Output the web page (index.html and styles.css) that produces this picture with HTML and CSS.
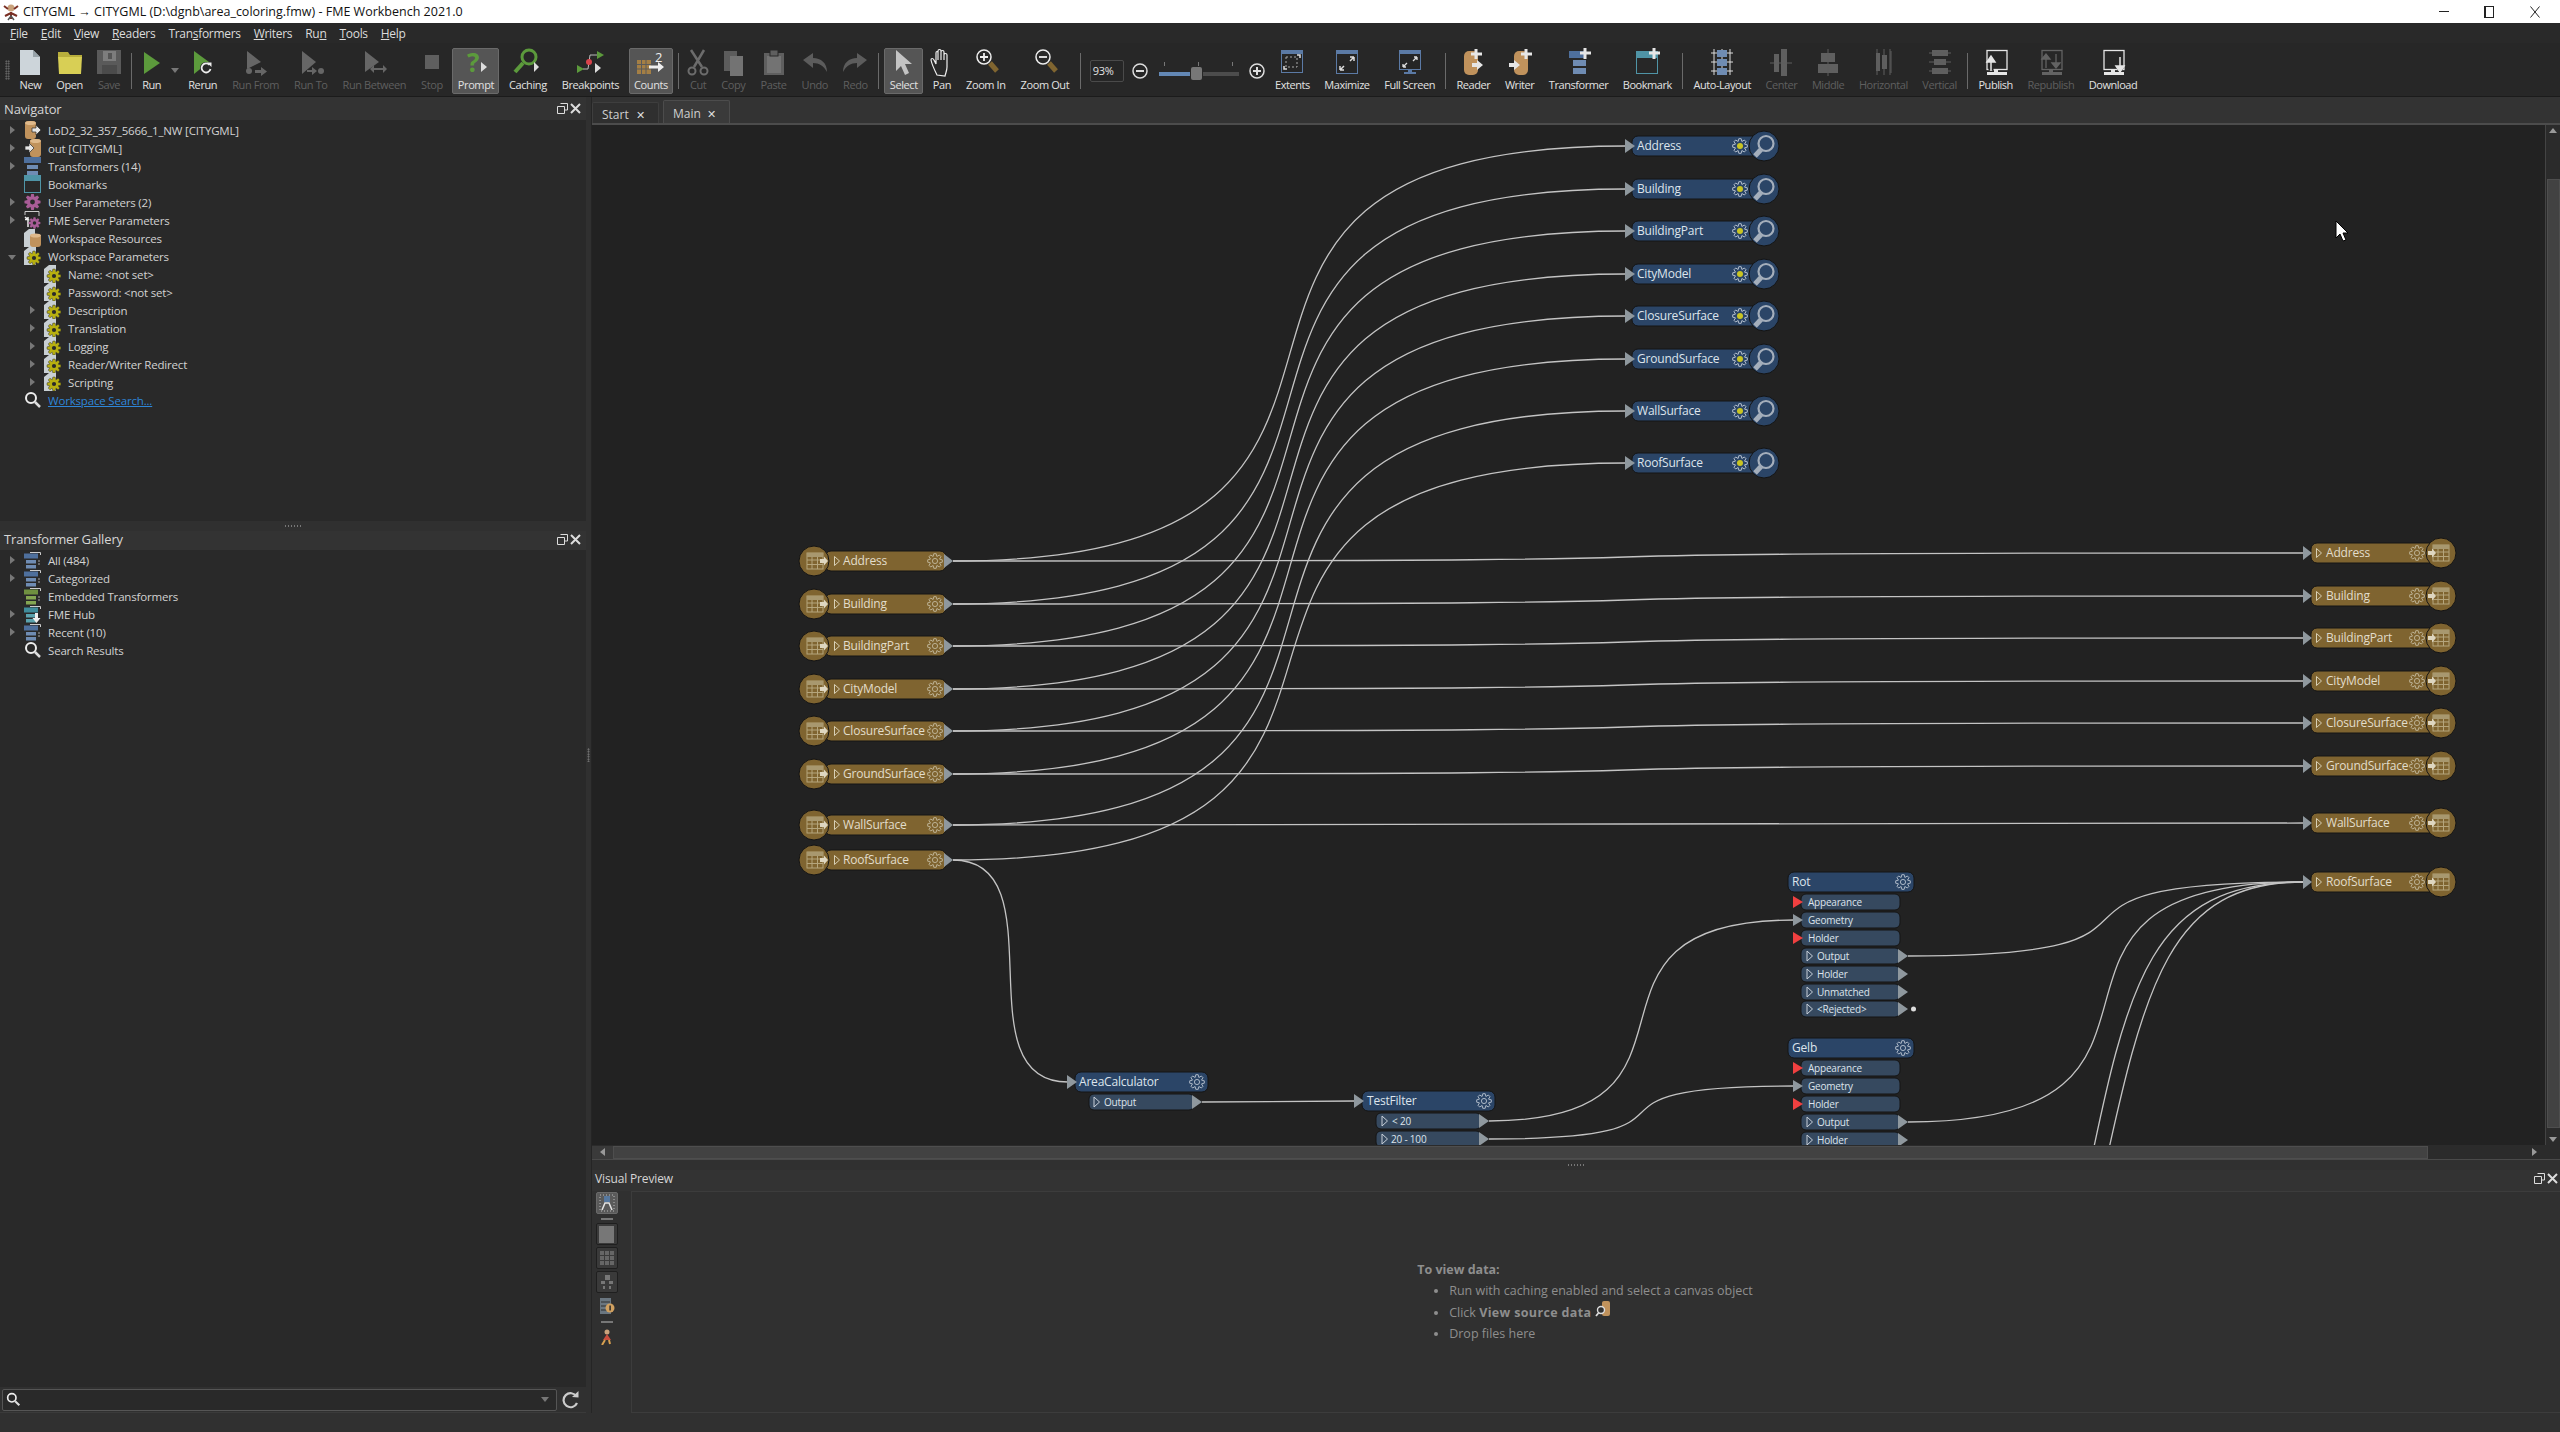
FILE: index.html
```html
<!DOCTYPE html>
<html>

<head>
    <meta charset="utf-8">
    <meta name="viewport" content="width=device-width">
    <title>FME Workbench</title>
    <link rel="stylesheet" href="styles.css">
</head>

<body>
    <!-- shared icons -->
    <svg class="defs" width="0" height="0">
        <defs>
            <polygon id="gear" points="-1.8,-4.6 -1.2,-7.3 1.2,-7.3 1.8,-4.6 1.98,-4.53 4.31,-6.01 6.01,-4.31 4.53,-1.98 4.6,-1.8 7.3,-1.2 7.3,1.2 4.6,1.8 4.53,1.98 6.01,4.31 4.31,6.01 1.98,4.53 1.8,4.6 1.2,7.3 -1.2,7.3 -1.8,4.6 -1.98,4.53 -4.31,6.01 -6.01,4.31 -4.53,1.98 -4.6,1.8 -7.3,1.2 -7.3,-1.2 -4.6,-1.8 -4.53,-1.98 -6.01,-4.31 -4.31,-6.01 -1.98,-4.53" />
            <g id="gear-plain">
                <use href="#gear" />
                <circle r="2.600" />
            </g>
            <g id="table">
                <rect x="0" y="-8" width="16" height="16" fill="none" stroke="#b5a57c" />
                <rect x="0" y="-8" width="16" height="4" fill="#a8986f" />
                <path d="M0 -1H16M0 3.5H16M5 -4V8M10.5 -4V8" stroke="#b5a57c" />
            </g>
            <g id="reader-row">
                <rect class="bar-brown" x="825" y="-10" width="121" height="20" rx="6" />
                <polygon class="port" points="944,-7 953,0 944,7" />
                <circle class="bar-brown" cx="814" r="15" />
                <use href="#table" x="807" />
                <path d="M820 -2h4v-2.5l4 4.5-4 4.5v-2.5h-4z" fill="#ded6c0" />
                <polygon class="tri-brown" points="834.5,-4.5 839.5,0 834.5,4.5" />
                <use href="#gear-plain" class="gear-brown" x="935" />
            </g>
            <g id="writer-row">
                <rect class="bar-brown" x="2311" y="-10" width="125" height="20" rx="6" />
                <polygon class="port" points="2303,-7 2312,0 2303,7" />
                <circle class="bar-brown" cx="2441" r="15" />
                <use href="#table" x="2433" />
                <path d="M2428 -2h4v-2.5l4 4.5-4 4.5v-2.5h-4z" fill="#ded6c0" />
                <polygon class="tri-brown" points="2316.5,-4.5 2321.5,0 2316.5,4.5" />
                <use href="#gear-plain" class="gear-brown" x="2417" />
            </g>
            <g id="inspector-row">
                <rect class="bar-blue" x="1632" y="-10" width="130" height="20" rx="6" />
                <polygon class="port" points="1625,-7 1635,0 1625,7" />
                <circle class="bar-blue" cx="1764" r="15" />
                <circle cx="1766" cy="-2.5" r="7.500" fill="none" stroke="#a4aebb" stroke-width="2.200" />
                <path d="M1761 3.500L1755 10" stroke="#a4aebb" stroke-width="5" />
                <use href="#gear" class="gear-blue" x="1740" />
                <circle class="gear-dot" cx="1740" r="3" />
            </g>
            <g id="in-row">
                <rect class="row-blue" width="99" height="16" y="-8" rx="5" />
            </g>
            <g id="out-row">
                <rect class="row-blue" width="99" height="16" y="-8" rx="5" />
                <polygon class="tri-blue" points="6,-5 11.500,0 6,5" />
                <polygon class="port" points="97,-7 107,0 97,7" />
            </g>
            <polygon id="port-red" class="port-red" points="-8,-6 2,0 -8,6" />
            <polygon id="port-grey" class="port" points="-8,-6 2,0 -8,6" />

            <symbol id="i-reader" viewBox="0 0 18 18">
                <rect x="1" y="0" width="11" height="18" rx="3" fill="#c0925c" />
                <ellipse cx="6.500" cy="2" rx="5.500" ry="2" fill="#dfb98b" />
                <path d="M8 7h4V4l5 5-5 5v-3H8z" fill="#e6e6e6" stroke="#292929" stroke-width=".7" />
            </symbol>
            <symbol id="i-writer" viewBox="0 0 18 18">
                <rect x="6" y="0" width="11" height="18" rx="3" fill="#c0925c" />
                <ellipse cx="11.500" cy="2" rx="5.500" ry="2" fill="#dfb98b" />
                <path d="M1 7h4V4l5 5-5 5v-3H1z" fill="#e6e6e6" stroke="#292929" stroke-width=".7" />
            </symbol>
            <symbol id="i-trans" viewBox="0 0 18 18">
                <rect x="0" y="0" width="17" height="6" fill="#4e6f9c" />
                <rect x="3" y="8" width="11" height="4" fill="#6f8cb3" />
                <rect x="3" y="14" width="11" height="4" fill="#6f8cb3" />
            </symbol>
            <symbol id="i-book" viewBox="0 0 18 18">
                <rect x=".5" y=".5" width="16" height="17" fill="none" stroke="#4f94a6" />
                <rect x="0" y="0" width="17" height="6" fill="#4f94a6" />
            </symbol>
            <symbol id="i-user" viewBox="0 0 18 18">
                <g transform="translate(8.500 9) scale(1.100)">
                    <use href="#gear" fill="#a95c97" />
                    <circle r="2.200" fill="#292929" />
                </g>
            </symbol>
            <symbol id="i-server" viewBox="0 0 18 18">
                <path d="M1 4V.5H15V5" fill="none" stroke="#ccc" />
                <path d="M4 16V6M1 8.500H4L1 6" fill="none" stroke="#eee" stroke-width="1.500" />
                <g transform="translate(10.500 12) scale(.8)">
                    <use href="#gear" fill="#a95c97" />
                    <circle r="2.200" fill="#292929" />
                </g>
            </symbol>
            <symbol id="i-res" viewBox="0 0 18 18">
                <path d="M0 4L5 0H11V18H0z" fill="#c8cfd3" />
                <rect x="6" y="5" width="11" height="13" rx="3" fill="#c0925c" />
                <ellipse cx="11.500" cy="6.500" rx="5.500" ry="2" fill="#dfb98b" />
            </symbol>
            <symbol id="i-param" viewBox="0 0 18 18">
                <path d="M0 4L5 0H12V18H0z" fill="#c8cfd3" />
                <g transform="translate(10 11) scale(.95)">
                    <use href="#gear" fill="#b8b010" stroke="#292929" stroke-width=".5" />
                    <circle r="2.200" fill="#2a2a2a" />
                </g>
            </symbol>
            <symbol id="i-search" viewBox="0 0 18 18">
                <circle cx="7" cy="7" r="5" fill="none" stroke="#eee" stroke-width="2" />
                <path d="M11 11L16 16" stroke="#ddd" stroke-width="2.500" />
            </symbol>
            <symbol id="i-gblue" viewBox="0 0 18 18">
                <path d="M6 1.500H16.500V4" fill="none" stroke="#ccc" />
                <rect x="0" y="2.500" width="14" height="5" fill="#4e6f9c" />
                <rect x="2" y="9" width="10" height="3.500" fill="#6f8cb3" />
                <rect x="2" y="14" width="10" height="3.500" fill="#6f8cb3" />
                <path d="M14 10h2M14 13h2" stroke="#aaa" />
            </symbol>
            <symbol id="i-ggreen" viewBox="0 0 18 18">
                <path d="M6 1.500H16.500V4" fill="none" stroke="#ccc" />
                <rect x="0" y="2.500" width="14" height="5" fill="#6f9040" />
                <rect x="2" y="9" width="10" height="3.500" fill="#84a652" />
                <rect x="2" y="14" width="10" height="3.500" fill="#84a652" />
                <path d="M14 10h2M14 13h2" stroke="#aaa" />
            </symbol>
            <symbol id="i-gteal" viewBox="0 0 18 18">
                <path d="M6 1.500H16.500V4" fill="none" stroke="#ccc" />
                <rect x="0" y="2.500" width="14" height="5" fill="#3f8c9b" />
                <rect x="2" y="9" width="10" height="3.500" fill="#5aa2ae" />
                <rect x="2" y="14" width="10" height="3.500" fill="#5aa2ae" />
                <path d="M11 8h3v5h2.500l-4 5-4-5H11z" fill="#eee" />
            </symbol>
        </defs>
    </svg>

    <div class="titlebar">
        <svg class="app-icon" width="18" height="18" viewBox="0 0 18 18">
            <circle cx="9" cy="5" r="3.500" fill="#c9a27c" />
            <path d="M2 3l4 3M16 3l-4 3M9 9v7M9 10l-6 3M9 10l6 3" stroke="#7a2f24" stroke-width="2" />
            <path d="M6 17l3-4 3 4" stroke="#555" stroke-width="1.500" fill="none" />
        </svg>
        <span class="title-text">CITYGML → CITYGML (D:\dgnb\area_coloring.fmw) - FME Workbench 2021.0</span>
        <div class="window-btns">
            <span class="win-min"></span>
            <span class="win-max"></span>
            <svg width="12" height="12" viewBox="0 0 12 12"><path d="M1.500 .5L10.500 11.500M10.500 .5L1.500 11.500" stroke="#222" /></svg>
        </div>
    </div>

    <div class="menubar">
        <span><u>F</u>ile</span>
        <span><u>E</u>dit</span>
        <span><u>V</u>iew</span>
        <span><u>R</u>eaders</span>
        <span>Tran<u>s</u>formers</span>
        <span><u>W</u>riters</span>
        <span>Ru<u>n</u></span>
        <span><u>T</u>ools</span>
        <span><u>H</u>elp</span>
    </div>

    <div class="toolbar">
        <div class="tb-grip"></div>

        <div class="tb">
            <svg class="tb-ic" viewBox="0 0 32 28"><path d="M6 2h13l7 7v18H6z" fill="#cdd5da" /><path d="M19 2l7 7h-7z" fill="#98a3a9" /></svg>
            <span>New</span>
        </div>
        <div class="tb">
            <svg class="tb-ic" viewBox="0 0 32 28"><path d="M4 9V4h10l2 3h12v2z" fill="#b8ae3c" /><path d="M4 9h24l-1 17H5z" fill="#d8cf55" /></svg>
            <span>Open</span>
        </div>
        <div class="tb off">
            <svg class="tb-ic" viewBox="0 0 32 28"><rect x="4" y="2" width="24" height="24" fill="#5a5a5a" /><rect x="10" y="3" width="13" height="10" fill="#7d7d7d" /><rect x="15" y="5" width="4" height="6" fill="#555" /><rect x="9" y="17" width="15" height="9" fill="#4b4b4b" /></svg>
            <span>Save</span>
        </div>
        <div class="tb-sep"></div>

        <div class="tb tb-run">
            <svg class="tb-ic" viewBox="0 0 32 28"><polygon points="8,4 24,15 8,26" fill="#5c9a3c" /></svg>
            <span>Run</span>
        </div>
        <div class="tb-drop"></div>
        <div class="tb">
            <svg class="tb-ic" viewBox="0 0 32 28"><polygon points="7,3 22,14 7,26" fill="#5c9a3c" /><circle cx="19" cy="20" r="6" fill="#292929" /><path d="M22.500 17A4.500 4.500 0 1 0 23.500 21" fill="none" stroke="#eee" stroke-width="1.800" /><path d="M20 14.500l4.500 0 0 4.500z" fill="#eee" /></svg>
            <span>Rerun</span>
        </div>
        <div class="tb off">
            <svg class="tb-ic" viewBox="0 0 32 28"><polygon points="7,3 21,14 7,21" fill="#666" /><circle cx="9" cy="23" r="3" fill="#666" /><path d="M15 22h6v-3l6 4.500-6 4.500v-3h-6z" fill="#666" /></svg>
            <span>Run From</span>
        </div>
        <div class="tb off">
            <svg class="tb-ic" viewBox="0 0 32 28"><polygon points="7,3 21,14 7,26" fill="#666" /><path d="M12 22h5v-3l5 4-5 4v-3h-5z" fill="#666" /><circle cx="26" cy="23" r="3" fill="#666" /></svg>
            <span>Run To</span>
        </div>
        <div class="tb off">
            <svg class="tb-ic" viewBox="0 0 32 28"><polygon points="7,3 21,14 7,24" fill="#666" /><path d="M12 21l4-4v3h9v-3l4 4-4 4v-3h-9v3z" fill="#666" /></svg>
            <span>Run Between</span>
        </div>
        <div class="tb off">
            <svg class="tb-ic" viewBox="0 0 32 28"><rect x="9" y="7" width="14" height="14" fill="#5f5f5f" /></svg>
            <span>Stop</span>
        </div>
        <div class="tb on">
            <svg class="tb-ic" viewBox="0 0 32 28"><text class="prompt-mark" x="7" y="24">?</text><polygon points="21,14 27,19 21,24" fill="#ddd" /></svg>
            <span>Prompt</span>
        </div>
        <div class="tb">
            <svg class="tb-ic" viewBox="0 0 32 28"><circle cx="17" cy="9" r="7" fill="none" stroke="#5c9a3c" stroke-width="3" /><path d="M11 15L3 24" stroke="#5c9a3c" stroke-width="4" /><polygon points="22,14 27,19 22,24" fill="#ddd" /></svg>
            <span>Caching</span>
        </div>
        <div class="tb">
            <svg class="tb-ic" viewBox="0 0 32 28"><path d="M9 21H14L16 7H23" fill="none" stroke="#bbb" /><polygon points="23,3 30,7 23,11" fill="#5c9a3c" /><polygon points="3,17 10,21 3,25" fill="#5c9a3c" /><circle cx="15" cy="14" r="3" fill="#d8434b" /><polygon points="21,15 27,20 21,25" fill="#ddd" /></svg>
            <span>Breakpoints</span>
        </div>
        <div class="tb on">
            <svg class="tb-ic" viewBox="0 0 32 28"><rect x="2" y="12" width="14" height="14" fill="#a47f45" /><path d="M2 16.500H16M2 21H16M6.500 12V26M11 12V26" stroke="#5a5a5a" /><text class="count-mark" x="20" y="14">2</text><path d="M14 17.500h9V14l6 5-6 5v-3.500h-9z" fill="#eee" /></svg>
            <span>Counts</span>
        </div>
        <div class="tb-sep"></div>

        <div class="tb off">
            <svg class="tb-ic" viewBox="0 0 32 28"><path d="M9 2L20 19M22 2L12 19" stroke="#6c6c6c" stroke-width="2.500" /><circle cx="10" cy="23" r="3.500" fill="none" stroke="#6c6c6c" stroke-width="2" /><circle cx="22" cy="23" r="3.500" fill="none" stroke="#6c6c6c" stroke-width="2" /></svg>
            <span>Cut</span>
        </div>
        <div class="tb off">
            <svg class="tb-ic" viewBox="0 0 32 28"><rect x="7" y="3" width="13" height="20" fill="#5c5c5c" /><rect x="13" y="8" width="13" height="20" fill="#737373" /></svg>
            <span>Copy</span>
        </div>
        <div class="tb off">
            <svg class="tb-ic" viewBox="0 0 32 28"><rect x="6" y="5" width="20" height="22" fill="#5f5f5f" /><rect x="9" y="8" width="14" height="17" fill="#737373" /><rect x="12" y="2" width="8" height="6" fill="#5f5f5f" stroke="#292929" /></svg>
            <span>Paste</span>
        </div>
        <div class="tb off">
            <svg class="tb-ic" viewBox="0 0 32 28"><path d="M28 24C28 15 22 10 14 10V5L4 12l10 8v-5c6 0 11 3 14 9z" fill="#5c5c5c" /></svg>
            <span>Undo</span>
        </div>
        <div class="tb off">
            <svg class="tb-ic" viewBox="0 0 32 28"><path d="M4 24C4 15 10 10 18 10V5l10 7-10 8v-5c-6 0-11 3-14 9z" fill="#5c5c5c" /></svg>
            <span>Redo</span>
        </div>
        <div class="tb-sep"></div>

        <div class="tb on">
            <svg class="tb-ic" viewBox="0 0 32 28"><polygon points="8,2 8,23 13,18 17,27 21,25 17,16 24,16" fill="#c4c4c4" /></svg>
            <span>Select</span>
        </div>
        <div class="tb">
            <svg class="tb-ic" viewBox="0 0 32 28"><path d="M11 27C9 23 6 17 5 12c0-2 2-2 3 0l2 4V5c0-2 2-2 2 0v7-9c0-2 3-2 3 0v9-8c0-2 3-2 3 0v8-5c0-2 3-2 3 0v12c0 3-1 5-2 9z" fill="#292929" stroke="#eee" stroke-width="1.200" /></svg>
            <span>Pan</span>
        </div>
        <div class="tb">
            <svg class="tb-ic" viewBox="0 0 32 28"><path d="M20 15L27 23" stroke="#806530" stroke-width="5" /><circle cx="14" cy="9" r="7" fill="#292929" stroke="#eee" stroke-width="1.500" /><path d="M10 9h8M14 5v8" stroke="#eee" stroke-width="1.800" /></svg>
            <span>Zoom In</span>
        </div>
        <div class="tb">
            <svg class="tb-ic" viewBox="0 0 32 28"><path d="M20 15L27 23" stroke="#806530" stroke-width="5" /><circle cx="14" cy="9" r="7" fill="#292929" stroke="#eee" stroke-width="1.500" /><path d="M10 9h8" stroke="#eee" stroke-width="1.800" /></svg>
            <span>Zoom Out</span>
        </div>
        <div class="tb-sep"></div>

        <div class="zoom-box">
            <div class="zoom-pct">93%</div>
            <svg width="18" height="18" viewBox="0 0 18 18"><circle cx="9" cy="9" r="7" fill="none" stroke="#ddd" stroke-width="1.500" /><path d="M5 9h8" stroke="#ddd" stroke-width="2" /></svg>
            <div class="zoom-track">
                <div class="zoom-ticks"><i></i><i></i><i></i></div>
                <div class="zoom-line">
                    <div class="zoom-fill"></div>
                    <div class="zoom-thumb"></div>
                    <div class="zoom-rest"></div>
                </div>
            </div>
            <svg width="18" height="18" viewBox="0 0 18 18"><circle cx="9" cy="9" r="7" fill="none" stroke="#ddd" stroke-width="1.500" /><path d="M5 9h8M9 5v8" stroke="#ddd" stroke-width="2" /></svg>
        </div>

        <div class="tb tb-tight">
            <svg class="tb-ic" viewBox="0 0 32 28"><rect x="5.500" y="2.500" width="21" height="22" fill="#252525" stroke="#5b7aa5" /><rect x="5" y="2" width="22" height="4" fill="#5b7aa5" /><rect x="10" y="9" width="11" height="10" fill="none" stroke="#aaa" stroke-dasharray="2 2" /><path d="M24 10V7h-3M8 18v3h3" fill="none" stroke="#ddd" stroke-width="1.500" /></svg>
            <span>Extents</span>
        </div>
        <div class="tb tb-tight">
            <svg class="tb-ic" viewBox="0 0 32 28"><rect x="5.500" y="2.500" width="21" height="23" fill="#252525" stroke="#5b7aa5" /><rect x="5" y="2" width="22" height="4" fill="#5b7aa5" /><path d="M23 9v4M23 9h-4M23 9l-4 4M9 22v-4M9 22h4M9 22l4-4" fill="none" stroke="#ddd" stroke-width="1.500" /></svg>
            <span>Maximize</span>
        </div>
        <div class="tb tb-tight">
            <svg class="tb-ic" viewBox="0 0 32 28"><rect x="5.500" y="2.500" width="21" height="19" fill="#252525" stroke="#5b7aa5" /><rect x="5" y="2" width="22" height="4" fill="#5b7aa5" /><rect x="14" y="21" width="4" height="3" fill="#5b7aa5" /><rect x="10" y="24" width="12" height="2" fill="#5b7aa5" /><path d="M23 9v3M23 9h-3M23 9l-4 4M9 19v-3M9 19h3M9 19l4-4" fill="none" stroke="#ddd" stroke-width="1.300" /></svg>
            <span>Full Screen</span>
        </div>
        <div class="tb-sep"></div>

        <div class="tb tb-tight">
            <svg class="tb-ic" viewBox="0 0 32 28"><rect x="7" y="3" width="14" height="24" rx="5" fill="#c0925c" /><path d="M19 1v10M14 6h11" stroke="#e6e6e6" stroke-width="3" /><path d="M15 15h5v-3l6 5-6 5v-3h-5z" fill="#e6e6e6" /></svg>
            <span>Reader</span>
        </div>
        <div class="tb tb-tight">
            <svg class="tb-ic" viewBox="0 0 32 28"><rect x="10" y="3" width="14" height="24" rx="5" fill="#c0925c" /><path d="M22 1v10M17 6h11" stroke="#e6e6e6" stroke-width="3" /><path d="M5 15h5v-3l6 5-6 5v-3H5z" fill="#e6e6e6" /></svg>
            <span>Writer</span>
        </div>
        <div class="tb tb-tight">
            <svg class="tb-ic" viewBox="0 0 32 28"><rect x="6" y="3" width="17" height="7" fill="#4e6f9c" /><rect x="10" y="12" width="13" height="6" fill="#6f8cb3" /><rect x="10" y="20" width="13" height="6" fill="#6f8cb3" /><path d="M22 0v11M17 5h11" stroke="#e6e6e6" stroke-width="3" /></svg>
            <span>Transformer</span>
        </div>
        <div class="tb tb-tight">
            <svg class="tb-ic" viewBox="0 0 32 28"><rect x="5.500" y="3.500" width="21" height="22" fill="none" stroke="#4f94a6" /><rect x="5" y="3" width="22" height="7" fill="#4f94a6" /><path d="M23 0v11M18 5h11" stroke="#e6e6e6" stroke-width="3" /></svg>
            <span>Bookmark</span>
        </div>
        <div class="tb-sep"></div>

        <div class="tb tb-tight">
            <svg class="tb-ic" viewBox="0 0 32 28"><path d="M8 1V27M24 1V27M5 5H27M5 14H27M5 23H27M16 1V27" stroke="#ddd" /><rect x="11" y="2" width="10" height="7" fill="#6f8cb3" /><rect x="11" y="11" width="10" height="7" fill="#6f8cb3" /><rect x="11" y="20" width="10" height="7" fill="#6f8cb3" /></svg>
            <span>Auto-Layout</span>
        </div>
        <div class="tb tb-tight off">
            <svg class="tb-ic" viewBox="0 0 32 28"><rect x="9" y="6" width="5" height="18" fill="#5f5f5f" /><rect x="16" y="1" width="6" height="27" fill="#5f5f5f" /><path d="M5 15H27" stroke="#5f5f5f" /></svg>
            <span>Center</span>
        </div>
        <div class="tb tb-tight off">
            <svg class="tb-ic" viewBox="0 0 32 28"><rect x="9" y="5" width="14" height="9" fill="#5f5f5f" /><rect x="6" y="16" width="20" height="9" fill="#5f5f5f" /><path d="M16 1V28" stroke="#5f5f5f" /></svg>
            <span>Middle</span>
        </div>
        <div class="tb tb-tight off">
            <svg class="tb-ic" viewBox="0 0 32 28"><rect x="9" y="5" width="4" height="18" fill="#5f5f5f" /><rect x="15" y="7" width="5" height="14" fill="#5f5f5f" /><path d="M10 1V27M17 1V27M23 1V27M24 3V25" stroke="#5f5f5f" /></svg>
            <span>Horizontal</span>
        </div>
        <div class="tb tb-tight off">
            <svg class="tb-ic" viewBox="0 0 32 28"><rect x="8" y="2" width="16" height="6" fill="#5f5f5f" /><rect x="10" y="11" width="12" height="6" fill="#5f5f5f" /><rect x="8" y="20" width="16" height="6" fill="#5f5f5f" /><path d="M5 14H27M5 5H27M5 23H27" stroke="#5f5f5f" /></svg>
            <span>Vertical</span>
        </div>
        <div class="tb-sep"></div>

        <div class="tb tb-tight">
            <svg class="tb-ic" viewBox="0 0 32 28"><rect x="7" y="2.500" width="20" height="19" fill="none" stroke="#e6e6e6" stroke-width="1.300" /><rect x="14" y="21" width="4" height="4" fill="#e6e6e6" /><rect x="7" y="24" width="20" height="3" fill="#e6e6e6" /><path d="M11 22V11" stroke="#292929" stroke-width="5" /><path d="M11 23V12M7 14l4-6 4 6z" fill="#e6e6e6" stroke="#e6e6e6" stroke-width="1.500" /></svg>
            <span>Publish</span>
        </div>
        <div class="tb tb-tight off">
            <svg class="tb-ic" viewBox="0 0 32 28"><rect x="7" y="2.500" width="20" height="19" fill="none" stroke="#636363" stroke-width="1.300" /><rect x="7" y="24" width="20" height="3" fill="#636363" /><rect x="14" y="21" width="4" height="4" fill="#636363" /><path d="M11 20V9M7 11l4-5 4 5zM21 6V19M17 15l4 5 4-5z" fill="#636363" stroke="#636363" stroke-width="1.300" /></svg>
            <span>Republish</span>
        </div>
        <div class="tb tb-tight">
            <svg class="tb-ic" viewBox="0 0 32 28"><rect x="7" y="2.500" width="20" height="19" fill="none" stroke="#e6e6e6" stroke-width="1.300" /><rect x="14" y="21" width="4" height="4" fill="#e6e6e6" /><rect x="7" y="24" width="20" height="3" fill="#e6e6e6" /><path d="M23 9V22" stroke="#292929" stroke-width="5" /><path d="M23 9V20M19 18l4 6 4-6z" fill="#e6e6e6" stroke="#e6e6e6" stroke-width="1.500" /></svg>
            <span>Download</span>
        </div>
    </div>

    <div class="main">
        <div class="left-dock">
            <div class="dock-head">
                <span>Navigator</span>
                <div class="dock-btns">
                    <svg width="11" height="11" viewBox="0 0 11 11"><path d="M3.500 .5H10.500V7H8M.5 3.500H7.500V10.500H.5z" fill="none" stroke="#ddd" /></svg>
                    <svg width="11" height="11" viewBox="0 0 11 11"><path d="M1 1L10 10M10 1L1 10" stroke="#ddd" stroke-width="2" /></svg>
                </div>
            </div>
            <div class="tree tree-nav">
                <div class="tree-row"><i class="arrow"></i><svg class="ic"><use href="#i-reader" /></svg>LoD2_32_357_5666_1_NW [CITYGML]</div>
                <div class="tree-row"><i class="arrow"></i><svg class="ic"><use href="#i-writer" /></svg>out [CITYGML]</div>
                <div class="tree-row"><i class="arrow"></i><svg class="ic"><use href="#i-trans" /></svg>Transformers (14)</div>
                <div class="tree-row"><i class="arrow none"></i><svg class="ic"><use href="#i-book" /></svg>Bookmarks</div>
                <div class="tree-row"><i class="arrow"></i><svg class="ic"><use href="#i-user" /></svg>User Parameters (2)</div>
                <div class="tree-row"><i class="arrow"></i><svg class="ic"><use href="#i-server" /></svg>FME Server Parameters</div>
                <div class="tree-row"><i class="arrow none"></i><svg class="ic"><use href="#i-res" /></svg>Workspace Resources</div>
                <div class="tree-row"><i class="arrow open"></i><svg class="ic"><use href="#i-param" /></svg>Workspace Parameters</div>
                <div class="tree-row sub"><i class="arrow none"></i><svg class="ic"><use href="#i-param" /></svg>Name: &lt;not set&gt;</div>
                <div class="tree-row sub"><i class="arrow none"></i><svg class="ic"><use href="#i-param" /></svg>Password: &lt;not set&gt;</div>
                <div class="tree-row sub"><i class="arrow"></i><svg class="ic"><use href="#i-param" /></svg>Description</div>
                <div class="tree-row sub"><i class="arrow"></i><svg class="ic"><use href="#i-param" /></svg>Translation</div>
                <div class="tree-row sub"><i class="arrow"></i><svg class="ic"><use href="#i-param" /></svg>Logging</div>
                <div class="tree-row sub"><i class="arrow"></i><svg class="ic"><use href="#i-param" /></svg>Reader/Writer Redirect</div>
                <div class="tree-row sub"><i class="arrow"></i><svg class="ic"><use href="#i-param" /></svg>Scripting</div>
                <div class="tree-row"><i class="arrow none"></i><svg class="ic"><use href="#i-search" /></svg><a class="link">Workspace Search...</a></div>
            </div>
            <div class="grip-row"><div class="grip"></div></div>
            <div class="dock-head dock-head-low">
                <span>Transformer Gallery</span>
                <div class="dock-btns">
                    <svg width="11" height="11" viewBox="0 0 11 11"><path d="M3.500 .5H10.500V7H8M.5 3.500H7.500V10.500H.5z" fill="none" stroke="#ddd" /></svg>
                    <svg width="11" height="11" viewBox="0 0 11 11"><path d="M1 1L10 10M10 1L1 10" stroke="#ddd" stroke-width="2" /></svg>
                </div>
            </div>
            <div class="tree tree-gallery">
                <div class="tree-row"><i class="arrow"></i><svg class="ic"><use href="#i-gblue" /></svg>All (484)</div>
                <div class="tree-row"><i class="arrow"></i><svg class="ic"><use href="#i-gblue" /></svg>Categorized</div>
                <div class="tree-row"><i class="arrow none"></i><svg class="ic"><use href="#i-ggreen" /></svg>Embedded Transformers</div>
                <div class="tree-row"><i class="arrow"></i><svg class="ic"><use href="#i-gteal" /></svg>FME Hub</div>
                <div class="tree-row"><i class="arrow"></i><svg class="ic"><use href="#i-gblue" /></svg>Recent (10)</div>
                <div class="tree-row"><i class="arrow none"></i><svg class="ic"><use href="#i-search" /></svg>Search Results</div>
            </div>
            <div class="search-row">
                <div class="search-box">
                    <svg class="search-ic"><use href="#i-search" /></svg>
                    <i class="search-drop"></i>
                </div>
                <svg class="refresh" width="18" height="18" viewBox="0 0 18 18"><path d="M14.500 5.500A7 7 0 1 0 15 12" fill="none" stroke="#ccc" stroke-width="2.200" /><polygon points="10,6 16.500,6.500 16.500,0" fill="#ccc" /></svg>
            </div>
        </div>
        <div class="left-gap"><div class="grip-v"></div></div>

        <div class="center">
            <div class="tabs">
                <div class="tab">Start<span class="tab-x">✕</span></div>
                <div class="tab tab-on">Main<span class="tab-x">✕</span></div>
            </div>
            <div class="canvas-row">
                <svg class="canvas" width="1953" height="1020" viewBox="592 125 1953 1020">
                    <!-- connections -->
                    <g class="wires">
                        <path d="M953 561C1507 561 1073 146 1626 146" />
                        <path d="M953 604C1507 604 1073 189 1626 189" />
                        <path d="M953 646C1507 646 1073 231 1626 231" />
                        <path d="M953 689C1507 689 1073 274 1626 274" />
                        <path d="M953 731C1507 731 1073 316 1626 316" />
                        <path d="M953 774C1507 774 1073 359 1626 359" />
                        <path d="M953 825C1507 825 1073 411 1626 411" />
                        <path d="M953 860C1507 860 1073 463 1626 463" />
                        <path d="M953 561C2050 561 1200 553 2304 553" />
                        <path d="M953 604C2050 604 1200 596 2304 596" />
                        <path d="M953 646C2050 646 1200 638 2304 638" />
                        <path d="M953 689C2050 689 1200 681 2304 681" />
                        <path d="M953 731C2050 731 1200 723 2304 723" />
                        <path d="M953 774C2050 774 1200 766 2304 766" />
                        <path d="M953 825C2050 825 1200 823 2304 823" />
                        <path d="M953 860C1060 860 960 1082 1068 1082" />
                        <path d="M1202 1102L1355 1101" />
                        <path d="M1489 1121C1739 1121 1544 920 1794 920" />
                        <path d="M1489 1139C1739 1139 1544 1086 1794 1086" />
                        <path d="M1908 956C2228 956 1983 882 2304 882" />
                        <path d="M1908 1122C2238 1122 1973 882 2304 882" />
                        <path d="M2085 1190C2128 980 2150 882 2304 882" />
                        <path d="M2100 1190C2145 980 2170 882 2304 882" />
                    </g>

                    <!-- readers -->
                    <g class="node-text"><use href="#reader-row" y="561" /><text x="843" y="565">Address</text></g>
                    <g class="node-text"><use href="#reader-row" y="604" /><text x="843" y="608">Building</text></g>
                    <g class="node-text"><use href="#reader-row" y="646" /><text x="843" y="650">BuildingPart</text></g>
                    <g class="node-text"><use href="#reader-row" y="689" /><text x="843" y="693">CityModel</text></g>
                    <g class="node-text"><use href="#reader-row" y="731" /><text x="843" y="735">ClosureSurface</text></g>
                    <g class="node-text"><use href="#reader-row" y="774" /><text x="843" y="778">GroundSurface</text></g>
                    <g class="node-text"><use href="#reader-row" y="825" /><text x="843" y="829">WallSurface</text></g>
                    <g class="node-text"><use href="#reader-row" y="860" /><text x="843" y="864">RoofSurface</text></g>

                    <!-- inspectors -->
                    <g class="node-text blue"><use href="#inspector-row" y="146" /><text x="1637" y="150">Address</text></g>
                    <g class="node-text blue"><use href="#inspector-row" y="189" /><text x="1637" y="193">Building</text></g>
                    <g class="node-text blue"><use href="#inspector-row" y="231" /><text x="1637" y="235">BuildingPart</text></g>
                    <g class="node-text blue"><use href="#inspector-row" y="274" /><text x="1637" y="278">CityModel</text></g>
                    <g class="node-text blue"><use href="#inspector-row" y="316" /><text x="1637" y="320">ClosureSurface</text></g>
                    <g class="node-text blue"><use href="#inspector-row" y="359" /><text x="1637" y="363">GroundSurface</text></g>
                    <g class="node-text blue"><use href="#inspector-row" y="411" /><text x="1637" y="415">WallSurface</text></g>
                    <g class="node-text blue"><use href="#inspector-row" y="463" /><text x="1637" y="467">RoofSurface</text></g>

                    <!-- writers -->
                    <g class="node-text"><use href="#writer-row" y="553" /><text x="2326" y="557">Address</text></g>
                    <g class="node-text"><use href="#writer-row" y="596" /><text x="2326" y="600">Building</text></g>
                    <g class="node-text"><use href="#writer-row" y="638" /><text x="2326" y="642">BuildingPart</text></g>
                    <g class="node-text"><use href="#writer-row" y="681" /><text x="2326" y="685">CityModel</text></g>
                    <g class="node-text"><use href="#writer-row" y="723" /><text x="2326" y="727">ClosureSurface</text></g>
                    <g class="node-text"><use href="#writer-row" y="766" /><text x="2326" y="770">GroundSurface</text></g>
                    <g class="node-text"><use href="#writer-row" y="823" /><text x="2326" y="827">WallSurface</text></g>
                    <g class="node-text"><use href="#writer-row" y="882" /><text x="2326" y="886">RoofSurface</text></g>

                    <!-- AreaCalculator -->
                    <g class="node-text blue">
                        <rect class="bar-blue" x="1075" y="1072" width="133" height="20" rx="6" />
                        <polygon class="port" points="1067,1075 1077,1082 1067,1089" />
                        <text x="1079" y="1086">AreaCalculator</text>
                        <use href="#gear-plain" class="gear-head" x="1197" y="1082" />
                        <rect class="row-blue" x="1089" y="1094" width="105" height="16" rx="5" />
                        <polygon class="tri-blue" points="1094,1097 1099.500,1102 1094,1107" />
                        <text class="small" x="1104" y="1106">Output</text>
                        <polygon class="port" points="1192,1095 1202,1102 1192,1109" />
                    </g>

                    <!-- TestFilter -->
                    <g class="node-text blue">
                        <rect class="bar-blue" x="1362" y="1091" width="133" height="20" rx="6" />
                        <polygon class="port" points="1354,1094 1364,1101 1354,1108" />
                        <text x="1367" y="1105">TestFilter</text>
                        <use href="#gear-plain" class="gear-head" x="1484" y="1101" />
                        <rect class="row-blue" x="1376" y="1113" width="105" height="16" rx="5" />
                        <polygon class="tri-blue" points="1382,1116 1387.500,1121 1382,1126" />
                        <text class="small" x="1392" y="1125">&lt; 20</text>
                        <polygon class="port" points="1479,1114 1489,1121 1479,1128" />
                        <rect class="row-blue" x="1376" y="1131" width="105" height="16" rx="5" />
                        <polygon class="tri-blue" points="1382,1134 1387.500,1139 1382,1144" />
                        <text class="small" x="1391" y="1143">20 - 100</text>
                        <polygon class="port" points="1479,1132 1489,1139 1479,1146" />
                    </g>

                    <!-- Rot -->
                    <g class="node-text blue">
                        <rect class="bar-blue" x="1788" y="872" width="126" height="20" rx="6" />
                        <text x="1792" y="886">Rot</text>
                        <use href="#gear-plain" class="gear-head" x="1903" y="882" />
                        <g class="small" transform="translate(1801 902)"><use href="#in-row" /><use href="#port-red" /><text x="7" y="4">Appearance</text></g>
                        <g class="small" transform="translate(1801 920)"><use href="#in-row" /><use href="#port-grey" /><text x="7" y="4">Geometry</text></g>
                        <g class="small" transform="translate(1801 938)"><use href="#in-row" /><use href="#port-red" /><text x="7" y="4">Holder</text></g>
                        <g class="small" transform="translate(1801 956)"><use href="#out-row" /><text x="16" y="4">Output</text></g>
                        <g class="small" transform="translate(1801 974)"><use href="#out-row" /><text x="16" y="4">Holder</text></g>
                        <g class="small" transform="translate(1801 992)"><use href="#out-row" /><text x="16" y="4">Unmatched</text></g>
                        <g class="small" transform="translate(1801 1009)"><use href="#out-row" /><text x="16" y="4">&lt;Rejected&gt;</text><circle cx="112.500" r="2.500" fill="#ddd" /></g>
                    </g>

                    <!-- Gelb -->
                    <g class="node-text blue">
                        <rect class="bar-blue" x="1788" y="1038" width="126" height="20" rx="6" />
                        <text x="1792" y="1052">Gelb</text>
                        <use href="#gear-plain" class="gear-head" x="1903" y="1048" />
                        <g class="small" transform="translate(1801 1068)"><use href="#in-row" /><use href="#port-red" /><text x="7" y="4">Appearance</text></g>
                        <g class="small" transform="translate(1801 1086)"><use href="#in-row" /><use href="#port-grey" /><text x="7" y="4">Geometry</text></g>
                        <g class="small" transform="translate(1801 1104)"><use href="#in-row" /><use href="#port-red" /><text x="7" y="4">Holder</text></g>
                        <g class="small" transform="translate(1801 1122)"><use href="#out-row" /><text x="16" y="4">Output</text></g>
                        <g class="small" transform="translate(1801 1140)"><use href="#out-row" /><text x="16" y="4">Holder</text></g>
                    </g>

                    <!-- mouse pointer -->
                    <polygon points="2336,221 2336,238 2340,234 2343,241 2346,240 2343,233 2348,233" fill="#fff" stroke="#000" />
                </svg>
                <div class="vscroll">
                    <i class="up"></i>
                    <div class="vthumb"></div>
                    <i class="down"></i>
                </div>
            </div>
            <div class="hscroll">
                <div class="hbtn"><i class="left"></i></div>
                <div class="hthumb"></div>
                <i class="right"></i>
            </div>
            <div class="grip-row grip-mid"><div class="grip"></div></div>
            <div class="dock-head dock-head-preview">
                <span>Visual Preview</span>
                <div class="dock-btns">
                    <svg width="11" height="11" viewBox="0 0 11 11"><path d="M3.500 .5H10.500V7H8M.5 3.500H7.500V10.500H.5z" fill="none" stroke="#ddd" /></svg>
                    <svg width="11" height="11" viewBox="0 0 11 11"><path d="M1 1L10 10M10 1L1 10" stroke="#ddd" stroke-width="2" /></svg>
                </div>
            </div>
            <div class="preview">
                <div class="preview-tools">
                    <div class="pv-btn pv-on">
                        <svg width="16" height="18" viewBox="0 0 16 18"><rect x="1" y="1" width="14" height="16" fill="none" stroke="#bbb" stroke-dasharray="1 2" /><rect x="5" y="2" width="6" height="6" fill="#56789f" /><path d="M3 16L6 9H10L13 16" fill="none" stroke="#e4e4e4" stroke-width="1.500" /></svg>
                    </div>
                    <div class="pv-line"></div>
                    <div class="pv-btn"><div class="pv-square"></div></div>
                    <div class="pv-btn">
                        <svg width="14" height="15" viewBox="0 0 14 15"><path d="M0 0h4v4H0zM5 0h4v4H5zM10 0h4v4h-4zM0 5h4v4H0zM5 5h4v4H5zM10 5h4v4h-4zM0 10h4v4H0zM5 10h4v4H5zM10 10h4v4h-4z" fill="#666" /></svg>
                    </div>
                    <div class="pv-btn">
                        <svg width="14" height="15" viewBox="0 0 14 15"><path d="M5 0h5v5H5zM1 6h4v3H1zM9 6h4v3H9zM3 11h2v3H3zM9 11h2v3H9z" fill="#777" /></svg>
                    </div>
                    <svg class="pv-ic" width="16" height="16" viewBox="0 0 16 16"><rect x="1" y="0" width="11" height="16" fill="#6a7680" /><path d="M2 4H11M2 8H11M2 12H11" stroke="#2f2f2f" /><circle cx="11" cy="10" r="4.500" fill="#d0a060" /><rect x="10.400" y="7.500" width="1.400" height="5" fill="#222" /></svg>
                    <div class="pv-line"></div>
                    <svg class="pv-ic" width="16" height="16" viewBox="0 0 16 16"><circle cx="8" cy="3" r="2.500" fill="#c9a27c" /><path d="M8 5L4 11H12z" fill="#c84d3e" /><path d="M6 11L3 16M10 11L11 15" stroke="#d8a050" stroke-width="2" /></svg>
                </div>
                <div class="preview-body">
                    <div class="hint">
                        <b>To view data:</b>
                        <ul>
                            <li>Run with caching enabled and select a canvas object</li>
                            <li>Click <b class="strong-wide">View source data</b>
                                <svg width="16" height="16" viewBox="0 0 16 16"><rect x="7" y="0" width="8" height="15" rx="2" fill="#c0925c" /><circle cx="6" cy="9" r="3.500" fill="#303030" stroke="#ddd" stroke-width="1.400" /><path d="M3.500 12L1 15" stroke="#ddd" stroke-width="1.800" /></svg>
                            </li>
                            <li>Drop files here</li>
                        </ul>
                    </div>
                </div>
            </div>
        </div>
    </div>
    <div class="statusbar"></div>
</body>

</html>
```

FILE: styles.css
```css
* {
    box-sizing: border-box;
}

html,
body {
    margin: 0;
    height: 100%;
}

body {
    display: flex;
    flex-direction: column;
    overflow: hidden;
    background-color: #303030;
    color: #d8d8d8;
    font-family: "Open Sans", "Noto Sans", sans-serif;
    font-size: 12px;
}

.defs {
    position: absolute;
}

/* title + menu */
.titlebar {
    display: flex;
    align-items: center;
    height: 23px;
    padding-left: 2px;
    background-color: #fff;
    color: #111;
}

.app-icon {
    margin-right: 3px;
}

.title-text {
    font-size: 12.500px;
}

.window-btns {
    display: flex;
    align-items: center;
    gap: 35px;
    margin-left: auto;
    padding-right: 19px;
}

.win-min {
    width: 10px;
    height: 1px;
    background-color: #222;
}

.win-max {
    width: 10px;
    height: 12px;
    border: 1px solid #222;
    border-left-width: 2px;
}

.menubar {
    display: flex;
    align-items: center;
    gap: 13px;
    height: 20px;
    padding-left: 10px;
    background-color: #292929;
    color: #dcdcdc;
    font-size: 12px;
    letter-spacing: -.3px;
}

/* toolbar */
.toolbar {
    display: flex;
    height: 54px;
    padding-top: 5px;
    background-color: #272727;
    border-bottom: 1px solid #1b1b1b;
    font-size: 11px;
    color: #e2e2e2;
}

.tb-grip {
    width: 5px;
    height: 20px;
    margin: 12px 2px 0 5px;
    background-image: radial-gradient(#777 45%, transparent 50%);
    background-size: 2.500px 2.500px;
}

.tb {
    display: flex;
    flex-direction: column;
    align-items: center;
    height: 46px;
    margin: 0 2px;
    padding: 0 4.500px;
    border: 1px solid transparent;
    border-radius: 2px;
    white-space: nowrap;
    letter-spacing: -.4px;
}

.tb-tight {
    padding: 0 4.300px;
    letter-spacing: -.45px;
}

.tb span {
    line-height: 17px;
}

.tb-ic {
    width: 32px;
    height: 28px;
    flex: none;
    margin: -1px -16px 0;
    overflow: visible;
}

.tb.off {
    color: #5f5f5f;
}

.tb.on {
    background-color: #555;
    border-color: #6a6a6a;
}

.tb-sep {
    width: 1px;
    height: 36px;
    margin: 5px 3px 0;
    background-color: #6a6a6a;
}

.tb-drop {
    width: 0;
    height: 0;
    margin: 20px 2px 0;
    border: 4px solid transparent;
    border-top: 5px solid #777;
}

.zoom-box {
    display: flex;
    align-items: center;
    gap: 7px;
    height: 46px;
    padding: 0 2px 0 6px;
}

.zoom-pct {
    width: 34px;
    height: 22px;
    padding-left: 2px;
    border: 1px solid #4a4a4a;
    border-radius: 2px;
    background-color: #262626;
    font-size: 11px;
    line-height: 20px;
    letter-spacing: -.3px;
}

.zoom-track {
    display: flex;
    flex-direction: column;
    width: 80px;
    margin: 0 2px 0 3px;
}

.zoom-ticks {
    display: flex;
    justify-content: space-between;
    height: 5px;
    padding: 0 6px 0 5px;
}

.zoom-ticks i {
    width: 1px;
    height: 4px;
    background-color: #777;
}

.zoom-line {
    display: flex;
    align-items: center;
    height: 14px;
}

.zoom-fill {
    width: 31px;
    height: 4px;
    background-color: #6388b5;
}

.zoom-rest {
    flex: 1;
    height: 4px;
    background-color: #4c4c4c;
}

.zoom-thumb {
    width: 11px;
    height: 13px;
    margin: 0 1px;
    border-radius: 2px;
    background-color: #777;
}

/* docks */
.main {
    display: flex;
    flex: 1;
    min-height: 0;
}

.left-dock {
    display: flex;
    flex-direction: column;
    width: 586px;
    flex: none;
}

.left-gap {
    display: flex;
    align-items: center;
    justify-content: center;
    width: 6px;
    flex: none;
    border-right: 1px solid #252525;
}

.grip-v {
    width: 3px;
    height: 14px;
    background-image: radial-gradient(#777 45%, transparent 50%);
    background-size: 3px 2.500px;
}

.dock-head {
    display: flex;
    align-items: center;
    justify-content: space-between;
    height: 23px;
    padding: 0 5px 0 4px;
    background-color: #333;
    font-size: 13px;
    color: #d6d6d6;
    letter-spacing: -.15px;
}

.dock-head-low {
    height: 19px;
    padding-bottom: 3px;
}

.dock-head-preview {
    height: 21px;
    padding: 0 2px 5px 3px;
    font-size: 12px;
}

.dock-btns {
    display: flex;
    gap: 2px;
}

.tree {
    padding: 1px 0 0 2px;
    background-color: #292929;
    font-size: 11.500px;
    color: #d2d2d2;
    letter-spacing: -.18px;
}

.tree-nav {
    height: 401px;
}

.tree-gallery {
    flex: 1;
}

.tree-row {
    display: flex;
    align-items: center;
    height: 18px;
    white-space: nowrap;
}

.tree-row.sub {
    padding-left: 20px;
}

.arrow {
    width: 0;
    height: 0;
    margin: 0 9px 0 8px;
    border-left: 5px solid #777;
    border-top: 4px solid transparent;
    border-bottom: 4px solid transparent;
}

.arrow.none {
    border-left-color: transparent;
}

.arrow.open {
    margin: 3px 8px 0 6px;
    border-top: 5px solid #777;
    border-left: 4px solid transparent;
    border-right: 4px solid transparent;
    border-bottom: 0;
}

.ic {
    width: 18px;
    height: 18px;
    margin-right: 6px;
    flex: none;
    padding: 0;
}

.link {
    color: #2e86d8;
    text-decoration: underline;
}

.grip-row {
    display: flex;
    align-items: center;
    justify-content: center;
    height: 10px;
    flex: none;
}

.grip {
    width: 18px;
    height: 4px;
    background-image: radial-gradient(#777 45%, transparent 50%);
    background-size: 3px 4px;
}

.search-row {
    display: flex;
    align-items: center;
    height: 26px;
    flex: none;
    padding: 2px 0 2px 2px;
    border-bottom: 1px solid #3a3a3a;
}

.search-box {
    display: flex;
    align-items: center;
    justify-content: space-between;
    width: 555px;
    height: 22px;
    padding: 0 7px 0 3px;
    border: 1px solid #555;
    border-radius: 2px;
    background-color: #292929;
}

.search-ic {
    width: 15px;
    height: 15px;
}

.search-drop {
    width: 0;
    height: 0;
    border: 4px solid transparent;
    border-top: 5px solid #777;
    border-bottom: 0;
}

.refresh {
    margin-left: 5px;
}

/* tabs + canvas */
.center {
    display: flex;
    flex-direction: column;
    flex: 1;
    min-width: 0;
}

.tabs {
    display: flex;
    align-items: flex-end;
    gap: 4px;
    height: 28px;
    flex: none;
    background-color: #333;
    border-bottom: 2px solid #4c4c4c;
}

.tab {
    display: flex;
    align-items: center;
    justify-content: space-between;
    width: 67px;
    height: 21px;
    padding: 2px 13px 0 9px;
    border: 1px solid #3e3e3e;
    border-bottom: 0;
    border-radius: 2px 2px 0 0;
    background-color: #2f2f2f;
    font-size: 12px;
    color: #cfcfcf;
}

.tab-on {
    height: 23px;
    background-color: #3a3a3a;
    border-color: #4c4c4c;
}

.tab-x {
    font-size: 11px;
    color: #ddd;
}

.canvas-row {
    display: flex;
    height: 1020px;
    flex: none;
}

.canvas {
    display: block;
    flex: none;
    background-color: #222;
}

.vscroll {
    display: flex;
    flex-direction: column;
    align-items: center;
    flex: 1;
    padding: 3px 0;
    background-color: #2b2b2b;
    border-left: 1px solid #444;
}

.vthumb {
    width: 13px;
    flex: 1;
    margin: 46px 0 9px;
    background-color: #424242;
    border: 1px solid #4e4e4e;
}

.vscroll i,
.hscroll i {
    width: 0;
    height: 0;
    border: 4px solid transparent;
}

.vscroll .up {
    margin-bottom: 0;
    border-top: 0;
    border-bottom: 5px solid #999;
}

.vscroll .down {
    border-bottom: 0;
    border-top: 5px solid #999;
}

.hscroll {
    display: flex;
    align-items: center;
    height: 15px;
    flex: none;
    padding: 1px 0;
    border-bottom: 1px solid #4a4a4a;
    background-color: #2b2b2b;
}

.hbtn {
    display: flex;
    align-items: center;
    justify-content: center;
    width: 21px;
    height: 13px;
    background-color: #3a3a3a;
}

.hscroll .left {
    border-left: 0;
    border-right: 5px solid #999;
}

.hthumb {
    width: 1815px;
    height: 13px;
    background-color: #424242;
    border: 1px solid #4e4e4e;
}

.hscroll .right {
    margin-left: 104px;
    border-right: 0;
    border-left: 5px solid #999;
}

.grip-mid {
    height: 10px;
}

/* preview */
.preview {
    display: flex;
    flex: 1;
    min-height: 0;
}

.preview-tools {
    display: flex;
    flex-direction: column;
    align-items: center;
    width: 39px;
    flex: none;
    padding: 1px 10px 0 0;
    gap: 2px;
}

.pv-btn {
    display: flex;
    align-items: center;
    justify-content: center;
    width: 22px;
    height: 22px;
    flex: none;
    border: 1px solid #1f1f1f;
    border-radius: 2px;
    background-color: #3a3a3a;
}

.pv-on {
    background-color: #5a5a5a;
    border-color: #6a6a6a;
}

.pv-square {
    width: 15px;
    height: 17px;
    background-color: #777;
}

.pv-line {
    width: 12px;
    height: 2px;
    margin: 1.500px 0;
    background-color: #777;
}

.pv-ic {
    margin: 3px 0;
}

.preview-body {
    display: flex;
    flex: 1;
    align-items: center;
    justify-content: center;
    padding: 0 22px 2px 0;
    border-top: 1px solid #3c3c3c;
    border-left: 1px solid #3c3c3c;
    border-bottom: 1px solid #3c3c3c;
    color: #8e8e8e;
    font-size: 12.500px;
}

.hint {
    line-height: 21px;
}

.hint ul {
    margin: 0;
    padding-left: 32px;
}

.strong-wide {
    letter-spacing: .35px;
}

.statusbar {
    height: 19px;
    flex: none;
    background-color: #303030;
}

/* canvas nodes */
.wires path {
    fill: none;
    stroke: #c4c4c4;
    stroke-width: 1.300;
}

.bar-brown {
    fill: #7f6430;
    stroke: #141414;
}

.bar-blue {
    fill: #2b4567;
    stroke: #141414;
}

.row-blue {
    fill: #36495f;
    stroke: #141414;
}

.port {
    fill: #8f989e;
}

.port-red {
    fill: #f04040;
}

.tri-brown {
    fill: none;
    stroke: #d8d0b6;
}

.tri-blue {
    fill: none;
    stroke: #c8d0da;
}

.gear-brown {
    fill: none;
    stroke: #c9c1a8;
    stroke-width: .8;
}

.gear-head {
    fill: none;
    stroke: #c8d0da;
    stroke-width: .8;
}

.gear-blue {
    fill: none;
    stroke: #d0d8e2;
    stroke-width: .8;
}

.gear-dot {
    fill: #c9c422;
}

.node-text text {
    fill: #e2ddcb;
    font-family: "Open Sans", "Noto Sans", sans-serif;
    font-size: 12px;
    letter-spacing: -.2px;
}

.node-text.blue text {
    fill: #dde4ec;
}

.node-text .small,
.node-text .small text {
    font-size: 10px;
}

.prompt-mark {
    fill: #5c9a3c;
    font-family: "Open Sans", sans-serif;
    font-size: 26px;
    font-weight: 700;
}

.count-mark {
    fill: #eee;
    font-family: "Open Sans", sans-serif;
    font-size: 13px;
}
```
